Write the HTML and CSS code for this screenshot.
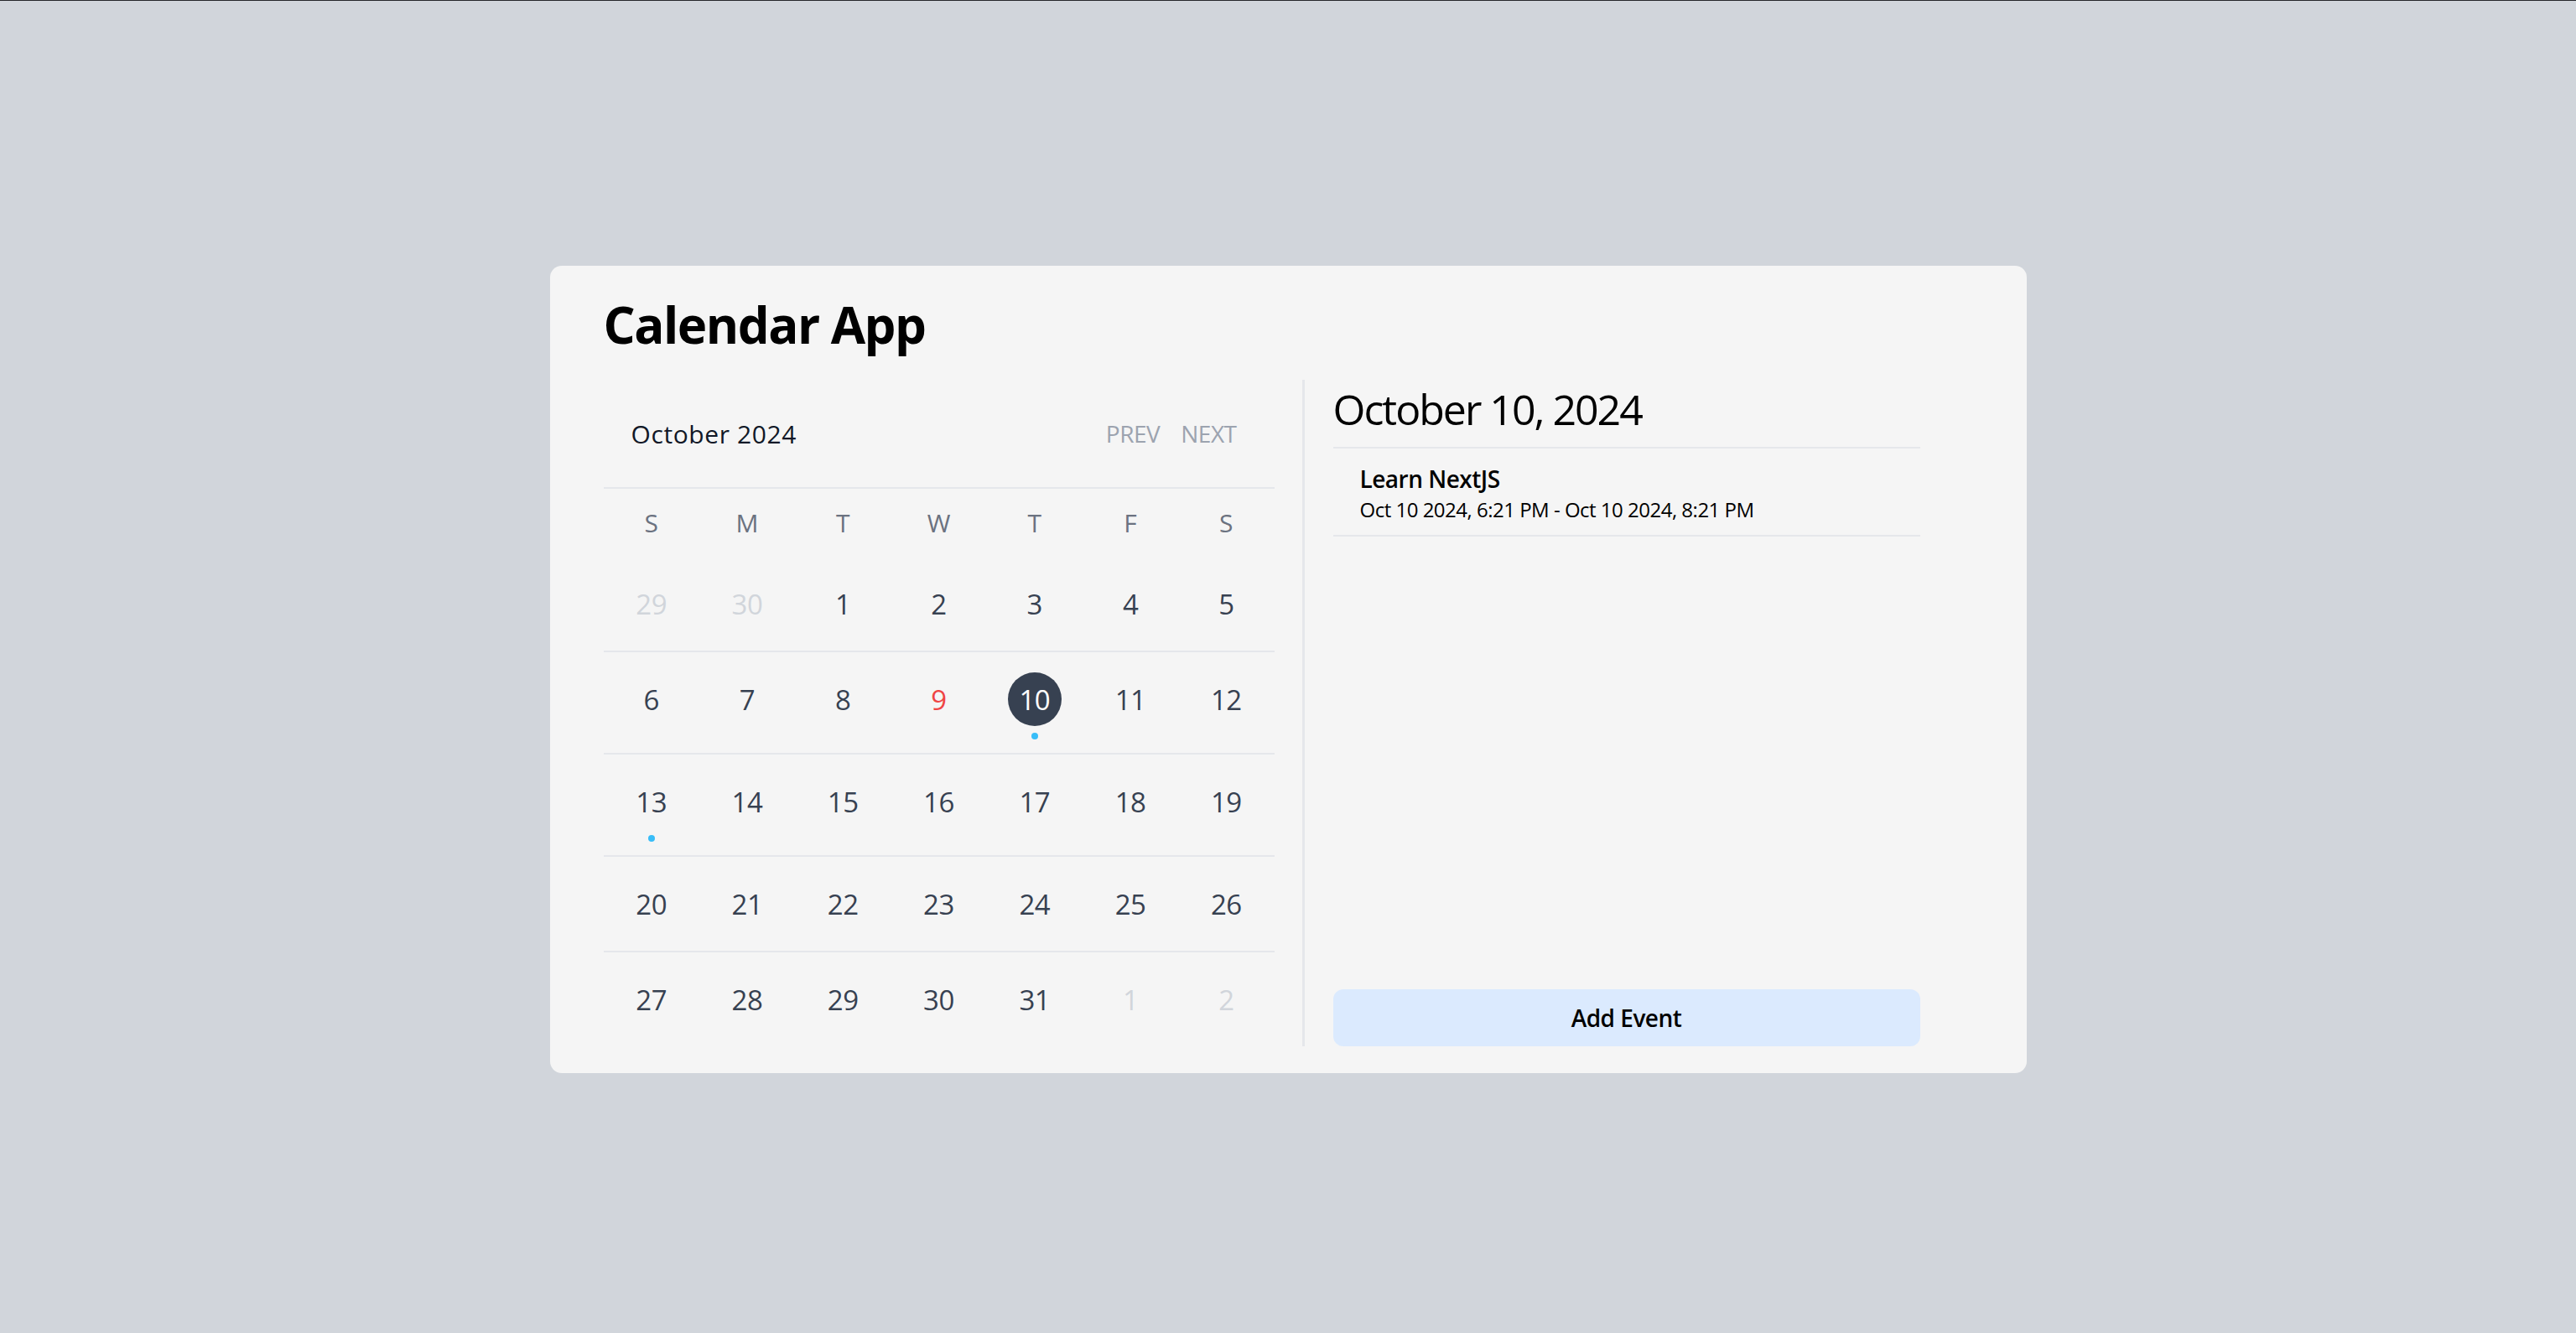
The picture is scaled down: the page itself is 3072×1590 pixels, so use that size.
FILE: index.html
```html
<!DOCTYPE html>
<html lang="en">
<head>
<meta charset="utf-8">
<title>Calendar App</title>
<link rel="stylesheet" href="styles.css">
</head>
<body>
<main class="card">
  <h1 class="title">Calendar App</h1>
  <div class="columns">
    <section class="calendar">
      <div class="cal-head">
        <div class="month">October 2024</div>
        <div class="nav">
          <button class="nav-btn">PREV</button>
          <button class="nav-btn">NEXT</button>
        </div>
      </div>
      <div class="weekdays">
        <div>S</div><div>M</div><div>T</div><div>W</div><div>T</div><div>F</div><div>S</div>
      </div>
      <div class="week">
        <div class="cell"><span class="num muted">29</span></div>
        <div class="cell"><span class="num muted">30</span></div>
        <div class="cell"><span class="num">1</span></div>
        <div class="cell"><span class="num">2</span></div>
        <div class="cell"><span class="num">3</span></div>
        <div class="cell"><span class="num">4</span></div>
        <div class="cell"><span class="num">5</span></div>
      </div>
      <div class="week">
        <div class="cell"><span class="num">6</span></div>
        <div class="cell"><span class="num">7</span></div>
        <div class="cell"><span class="num">8</span></div>
        <div class="cell"><span class="num today">9</span></div>
        <div class="cell"><span class="num selected">10</span><span class="dot"></span></div>
        <div class="cell"><span class="num">11</span></div>
        <div class="cell"><span class="num">12</span></div>
      </div>
      <div class="week">
        <div class="cell"><span class="num">13</span><span class="dot"></span></div>
        <div class="cell"><span class="num">14</span></div>
        <div class="cell"><span class="num">15</span></div>
        <div class="cell"><span class="num">16</span></div>
        <div class="cell"><span class="num">17</span></div>
        <div class="cell"><span class="num">18</span></div>
        <div class="cell"><span class="num">19</span></div>
      </div>
      <div class="week">
        <div class="cell"><span class="num">20</span></div>
        <div class="cell"><span class="num">21</span></div>
        <div class="cell"><span class="num">22</span></div>
        <div class="cell"><span class="num">23</span></div>
        <div class="cell"><span class="num">24</span></div>
        <div class="cell"><span class="num">25</span></div>
        <div class="cell"><span class="num">26</span></div>
      </div>
      <div class="week last">
        <div class="cell"><span class="num">27</span></div>
        <div class="cell"><span class="num">28</span></div>
        <div class="cell"><span class="num">29</span></div>
        <div class="cell"><span class="num">30</span></div>
        <div class="cell"><span class="num">31</span></div>
        <div class="cell"><span class="num muted">1</span></div>
        <div class="cell"><span class="num muted">2</span></div>
      </div>
    </section>
    <section class="day-panel">
      <h2 class="day-title">October 10, 2024</h2>
      <ul class="events">
        <li class="event">
          <div class="event-name">Learn NextJS</div>
          <div class="event-time">Oct 10 2024, 6:21 PM - Oct 10 2024, 8:21 PM</div>
        </li>
      </ul>
      <button class="add-btn">Add Event</button>
    </section>
  </div>
</main>
</body>
</html>
```
FILE: styles.css
```css
* { box-sizing: border-box; }

html, body {
  margin: 0;
  padding: 0;
}

body {
  background: #d1d5db;
  border-top: 1px solid #26272b;
  padding-top: 316px;
  min-height: 100vh;
  font-family: "Open Sans", "Noto Sans", "Liberation Sans", sans-serif;
  color: #000;
}

.card {
  width: 1761px;
  margin: 0 auto;
  background: #f5f5f5;
  border-radius: 14px;
  padding: 40px 64px 32px 64px;
}

.title {
  margin: 0 0 36px 0;
  font-size: 60px;
  line-height: 60px;
  font-weight: 700;
  letter-spacing: -1.5px;
}

.columns {
  display: flex;
}

.calendar {
  width: 800px;
  margin-right: 33px;
}

.cal-head {
  height: 130px;
  display: flex;
  align-items: center;
  justify-content: space-between;
  padding: 0 45px 0 33px;
  border-bottom: 2px solid #e5e7eb;
}

.month {
  font-size: 30px;
  font-weight: 500;
  color: #111827;
  letter-spacing: 0.6px;
}

.nav {
  display: flex;
  gap: 25px;
}

.nav-btn {
  background: none;
  border: 0;
  padding: 0;
  font-family: inherit;
  font-size: 28px;
  color: #9ca3af;
  letter-spacing: -0.5px;
}

.weekdays {
  height: 81px;
  display: grid;
  grid-template-columns: repeat(7, 1fr);
  align-items: center;
  text-align: center;
  font-size: 30px;
  color: #6b7280;
}

.week {
  display: grid;
  grid-template-columns: repeat(7, 1fr);
  padding: 24px 0;
  border-bottom: 2px solid #e5e7eb;
}

.week.last {
  border-bottom: 0;
}

.cell {
  display: flex;
  flex-direction: column;
  align-items: center;
}

.num {
  width: 64px;
  height: 64px;
  border-radius: 50%;
  display: flex;
  align-items: center;
  justify-content: center;
  font-size: 33px;
  font-weight: 500;
  color: #374151;
  letter-spacing: -0.5px;
}

.num.muted {
  color: #d1d5db;
  font-weight: 400;
}

.num.today {
  color: #ef4444;
}

.num.selected {
  background: #374151;
  color: #ffffff;
}

.dot {
  width: 8px;
  height: 8px;
  border-radius: 50%;
  background: #38bdf8;
  margin-top: 8px;
  margin-bottom: -8px;
}

.day-panel {
  border-left: 3px solid #e5e7eb;
  padding-left: 34px;
  width: 737px;
  display: flex;
  flex-direction: column;
}

.day-title {
  margin: 0;
  font-size: 50px;
  line-height: 70px;
  font-weight: 400;
  padding-bottom: 10px;
  border-bottom: 2px solid #e5e7eb;
  letter-spacing: -2px;
}

.events {
  list-style: none;
  margin: 0;
  padding: 0;
}

.event {
  padding: 18px 32px 14px 32px;
  border-bottom: 2px solid #e5e7eb;
}

.event-name {
  font-size: 28px;
  line-height: 36px;
  font-weight: 600;
  letter-spacing: -0.5px;
}

.event-time {
  margin-top: 3px;
  font-size: 24px;
  line-height: 32px;
  letter-spacing: -0.5px;
}

.add-btn {
  margin-top: auto;
  height: 68px;
  width: 100%;
  border: 0;
  border-radius: 12px;
  background: #dbeafe;
  font-family: inherit;
  font-size: 28px;
  font-weight: 600;
  color: #000;
  letter-spacing: -0.5px;
}
```
